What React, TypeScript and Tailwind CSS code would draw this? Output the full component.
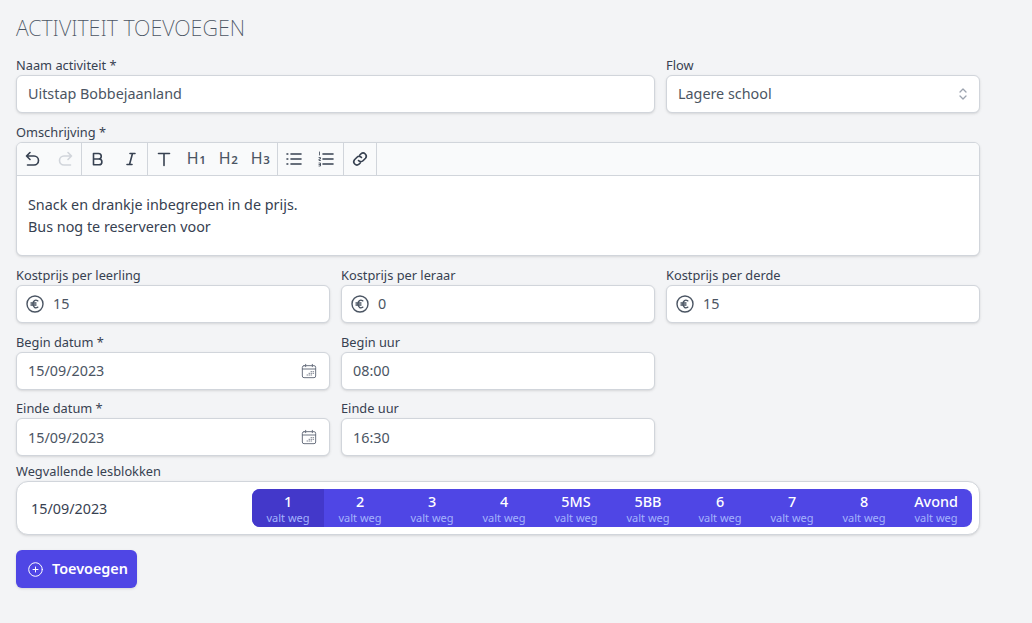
import React from "react";

const inputCls = "h-[38px] bg-white border border-[#d1d5db] rounded-md shadow-sm flex items-center text-[14.350px] text-[#4b5563]";

function Label({ children }: { children: React.ReactNode }) {
  return <div className="text-[12.800px] leading-[20px] text-[#374151]">{children}</div>;
}

function Euro() {
  return (
    <svg width="20" height="20" viewBox="0 0 20 20" fill="none" stroke="#4b5563" strokeWidth="1.400" strokeLinecap="round" strokeLinejoin="round">
      <circle cx="10" cy="10" r="8" />
      <path d="M12.800 6.800c-2.400-1.500-4.800-.200-4.800 3.200s2.400 4.700 4.800 3.200M6 9h5M6 11h5" />
    </svg>
  );
}

function Cal() {
  return (
    <svg width="16" height="16" viewBox="0 0 24 24" fill="none" stroke="#6b7280" strokeWidth="1.500" strokeLinecap="round">
      <rect x="2" y="4" width="20" height="18" rx="2.500" />
      <path d="M2 9h20M7 2v3.500M17 2v3.500" />
      <path d="M15 13h1M18 13h1M12 15.500h1M15 15.500h1M18 15.500h1M9 18h1M12 18h1M15 18h1" strokeWidth="1.300" />
    </svg>
  );
}

function Euroinput({ v }: { v: string }) {
  return (
    <div className={inputCls + " pl-[8px] gap-[8px]"}>
      <Euro />
      <span>{v}</span>
    </div>
  );
}

function Tb({ children }: { children: React.ReactNode }) {
  return <div className="w-[32px] flex items-center justify-center">{children}</div>;
}

const S = (p: { children: React.ReactNode; stroke?: string }) => (
  <svg width="18" height="18" viewBox="0 0 18 18" fill="none" stroke={p.stroke ?? "#374151"} strokeWidth="1.600" strokeLinecap="round" strokeLinejoin="round">
    {p.children}
  </svg>
);

function H({ n }: { n: string }) {
  return (
    <span className="text-[16px] leading-[20px] text-[#4b5563] tracking-[-0.5px]">
      H<span className="text-[11.500px] font-semibold ml-[1px]">{n}</span>
    </span>
  );
}

const blocks = ["1", "2", "3", "4", "5MS", "5BB", "6", "7", "8", "Avond"];

export default function App() {
  return (
    <div className="min-h-[623px] bg-[#f3f4f6] px-4 pt-[13px] font-['Noto_Sans',sans-serif]">
      <h1 className="text-[21.500px] leading-[30px] font-extralight text-[#4b5563] h-[32px] uppercase">Activiteit toevoegen</h1>
      <div className="w-[964px] grid grid-cols-3 gap-x-[11px] mt-[10px]">
        <div className="col-span-2">
          <Label>Naam activiteit *</Label>
          <div className={inputCls + " px-[11px]"}>Uitstap Bobbejaanland</div>
        </div>
        <div>
          <Label>Flow</Label>
          <div className={inputCls + " pl-[11px] pr-[10px] justify-between"}>
            <span>Lagere school</span>
            <svg width="12" height="16" viewBox="0 0 12 16" fill="none" stroke="#9ca3af" strokeWidth="1.300" strokeLinecap="round" strokeLinejoin="round">
              <path d="M3 6l3-3 3 3M3 10l3 3 3-3" />
            </svg>
          </div>
        </div>

        <div className="col-span-3 mt-[9px]">
          <Label>Omschrijving *</Label>
          <div className="h-[114px] bg-white border border-[#d1d5db] rounded-md shadow-sm overflow-hidden">
            <div className="h-[33px] bg-[#f9fafb] border-b border-[#d1d5db] flex">
              <div className="flex border-r border-[#d1d5db] w-[65px]">
                <Tb><S><path d="M6 2.500L2.500 6 6 9.500M2.500 6H10a4.500 4.500 0 010 9H3.500" /></S></Tb>
                <Tb><S stroke="#d1d5db"><path d="M12 2.500L15.500 6 12 9.500M15.500 6H8a4.500 4.500 0 000 9h6.500" /></S></Tb>
              </div>
              <div className="flex border-r border-[#d1d5db] w-[66px]">
                <Tb><S><path d="M4.500 3.500h5a2.700 2.700 0 010 5.500h-5zM4.500 9h5.500a2.900 2.900 0 010 5.800H4.500z" /></S></Tb>
                <Tb><S><path d="M9 3.500h5M6 14.500h5M11.500 3.500l-3 11" /></S></Tb>
              </div>
              <div className="flex border-r border-[#d1d5db] w-[130px]">
                <Tb><S><path d="M3.500 3.500h11M9 3.500v12" /></S></Tb>
                <Tb><H n="1" /></Tb>
                <Tb><H n="2" /></Tb>
                <Tb><H n="3" /></Tb>
              </div>
              <div className="flex border-r border-[#d1d5db] w-[66px]">
                <Tb><S><path d="M6 4h10M6 9h10M6 14h10M2 4h.8M2 9h.8M2 14h.8" /></S></Tb>
                <Tb>
                  <S>
                    <path d="M6 4h10M6 9h10M6 14h10" />
                    <path strokeWidth="0.800" d="M2.500 2v3M2 7.500h1.500v1.500h-1.500v1.500h1.500M2 13h1.500v3h-1.500M2 14.500h1.500" />
                  </S>
                </Tb>
              </div>
              <div className="flex border-r border-[#d1d5db] w-[33px]">
                <Tb><S><path d="M7.500 10.500a3 3 0 004.500.300l2.500-2.500a3.200 3.200 0 00-4.500-4.500L8.800 5M10.500 7.500a3 3 0 00-4.500-.300L3.500 9.700a3.200 3.200 0 004.500 4.500L9.200 13" /></S></Tb>
              </div>
            </div>
            <div className="px-[11px] pt-[18px] text-[14.350px] leading-[22px] text-[#374151]">
              <p>Snack en drankje inbegrepen in de prijs.</p>
              <p>Bus nog te reserveren voor</p>
            </div>
          </div>
        </div>

        <div className="mt-[9px]">
          <Label>Kostprijs per leerling</Label>
          <Euroinput v="15" />
        </div>
        <div className="mt-[9px]">
          <Label>Kostprijs per leraar</Label>
          <Euroinput v="0" />
        </div>
        <div className="mt-[9px]">
          <Label>Kostprijs per derde</Label>
          <Euroinput v="15" />
        </div>

        <div className="mt-[9px]">
          <Label>Begin datum *</Label>
          <div className={inputCls + " pl-[11px] pr-[12px] justify-between"}><span>15/09/2023</span><Cal /></div>
        </div>
        <div className="mt-[9px]">
          <Label>Begin uur</Label>
          <div className={inputCls + " px-[11px]"}>08:00</div>
        </div>
        <div />

        <div className="mt-[8px]">
          <Label>Einde datum *</Label>
          <div className={inputCls + " pl-[11px] pr-[12px] justify-between"}><span className="pt-[2px]">15/09/2023</span><Cal /></div>
        </div>
        <div className="mt-[8px]">
          <Label>Einde uur</Label>
          <div className={inputCls + " px-[11px]"}><span className="pt-[2px]">16:30</span></div>
        </div>
        <div />

        <div className="col-span-3 mt-[5px]">
          <Label>Wegvallende lesblokken</Label>
          <div className="h-[54px] bg-white border border-[#d1d5db] rounded-xl shadow-sm flex items-center justify-between pl-[14px] pr-[7px]">
            <span className="text-[14.350px] text-[#374151] pt-[2px]">15/09/2023</span>
            <div className="flex w-[720px] h-[38px] rounded-lg overflow-hidden bg-[#4f46e5]">
              {blocks.map((b, i) => (
                <div key={b} className={"w-[72px] flex flex-col items-center pt-[3px] " + (i === 0 ? "bg-[#4338ca]" : "")}>
                  <span className="text-[14.400px] leading-[20px] font-medium text-white">{b}</span>
                  <span className="text-[11px] leading-[11px] text-[#a5b4fc]">valt weg</span>
                </div>
              ))}
            </div>
          </div>
        </div>
      </div>
      <button className="mt-[15px] h-[38px] w-[121px] bg-[#4f46e5] rounded-md shadow-sm flex items-center pl-[12px] gap-[9px] text-white text-[14.400px] font-semibold">
        <svg width="15" height="15" viewBox="0 0 15 15" fill="none" stroke="#fff" strokeWidth="1" strokeLinecap="round">
          <circle cx="7.500" cy="7.500" r="6.800" />
          <path d="M7.500 5v5M5 7.500h5" />
        </svg>
        <span className="leading-[20px]">Toevoegen</span>
      </button>
    </div>
  );
}
